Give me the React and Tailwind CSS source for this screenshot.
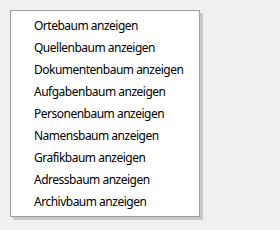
import React from 'react';

const items = [
  'Ortebaum anzeigen',
  'Quellenbaum anzeigen',
  'Dokumentenbaum anzeigen',
  'Aufgabenbaum anzeigen',
  'Personenbaum anzeigen',
  'Namensbaum anzeigen',
  'Grafikbaum anzeigen',
  'Adressbaum anzeigen',
  'Archivbaum anzeigen',
];

export default function App() {
  return (
    <div className="w-[280px] h-[230px] bg-[#f0f0f0] pt-[10px] pl-[10px]" style={{ fontFamily: '"Noto Sans", sans-serif' }}>
      <div className="w-[190px] h-[207px] bg-white border border-[#a0a0a0] shadow-[3px_3px_0_0_#c9c9c9] pt-[4px] pb-[3px]">
        {items.map((label) => (
          <div key={label} className="h-[22px] flex items-center pl-[23px] text-[12px] tracking-[-0.5px] text-black">
            {label}
          </div>
        ))}
      </div>
    </div>
  );
}
